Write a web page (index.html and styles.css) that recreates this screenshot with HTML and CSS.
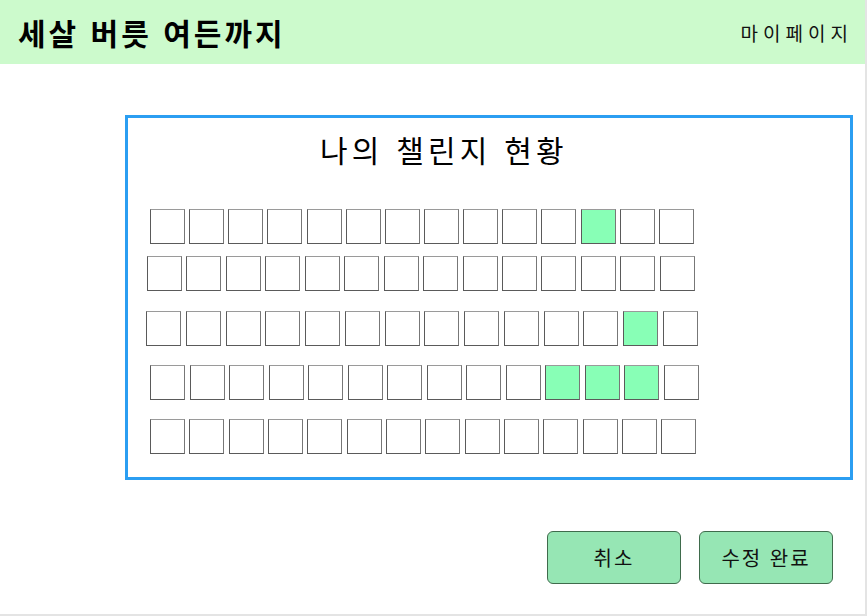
FILE: index.html
```html
<!DOCTYPE html>
<html lang="ko">
<head>
    <meta charset="UTF-8">
    <meta name="viewport" content="width=device-width, initial-scale=1.0">
    <title>세살 버릇 여든까지 - 나의 챌린지 현황</title>
    <link rel="stylesheet" href="styles.css">
</head>
<body>
    <div class="page">
        <header class="topbar">
            <h1 class="logo">세살 버릇 여든까지</h1>
            <a class="mypage" href="#">마이페이지</a>
        </header>

        <main class="content">
            <section class="board">
                <h2>나의 챌린지 현황</h2>

                <div class="grid">
                    <div class="row row-1">
                        <span class="cell"></span><span class="cell"></span><span class="cell"></span><span class="cell"></span><span class="cell"></span><span class="cell"></span><span class="cell"></span><span class="cell"></span><span class="cell"></span><span class="cell"></span><span class="cell"></span><span class="cell done"></span><span class="cell"></span><span class="cell"></span>
                    </div>
                    <div class="row row-2">
                        <span class="cell"></span><span class="cell"></span><span class="cell"></span><span class="cell"></span><span class="cell"></span><span class="cell"></span><span class="cell"></span><span class="cell"></span><span class="cell"></span><span class="cell"></span><span class="cell"></span><span class="cell"></span><span class="cell"></span><span class="cell"></span>
                    </div>
                    <div class="row row-3">
                        <span class="cell"></span><span class="cell"></span><span class="cell"></span><span class="cell"></span><span class="cell"></span><span class="cell"></span><span class="cell"></span><span class="cell"></span><span class="cell"></span><span class="cell"></span><span class="cell"></span><span class="cell"></span><span class="cell done"></span><span class="cell"></span>
                    </div>
                    <div class="row row-4">
                        <span class="cell"></span><span class="cell"></span><span class="cell"></span><span class="cell"></span><span class="cell"></span><span class="cell"></span><span class="cell"></span><span class="cell"></span><span class="cell"></span><span class="cell"></span><span class="cell done"></span><span class="cell done"></span><span class="cell done"></span><span class="cell"></span>
                    </div>
                    <div class="row row-5">
                        <span class="cell"></span><span class="cell"></span><span class="cell"></span><span class="cell"></span><span class="cell"></span><span class="cell"></span><span class="cell"></span><span class="cell"></span><span class="cell"></span><span class="cell"></span><span class="cell"></span><span class="cell"></span><span class="cell"></span><span class="cell"></span>
                    </div>
                </div>
            </section>

            <div class="actions">
                <button class="btn">취소</button>
                <button class="btn">수정 완료</button>
            </div>
        </main>
    </div>
</body>
</html>
```

FILE: styles.css
```css
body {
    margin: 0;
    padding: 0;
    background: #fff;
    color: #000;
    font-family: "Noto Sans CJK KR", "Noto Sans", sans-serif;
}

.page {
    width: 865px;
    height: 614px;
    border-right: 2px solid #e4e4e4;
    border-bottom: 2px solid #e4e4e4;
    overflow: hidden;
}

.topbar {
    height: 64px;
    background: #ccfacc;
    display: flex;
    align-items: center;
    justify-content: space-between;
    padding: 0 12px 0 18px;
}

.logo {
    margin: 0;
    font-size: 30px;
    font-weight: bold;
    letter-spacing: 3px;
    line-height: 1;
}

.mypage {
    color: #111;
    text-decoration: none;
    font-size: 19px;
    letter-spacing: 5px;
}

.content {
    padding: 51px 0 0 125px;
}

.board {
    width: 722px;
    height: 359px;
    border: 3px solid #2b9ef2;
}

.board h2 {
    margin: 11px 0 0;
    padding-left: 192px;
    font-size: 30px;
    font-weight: normal;
    letter-spacing: 4.2px;
    line-height: 40px;
}

.grid {
    margin-top: 40px;
    display: flex;
    flex-direction: column;
}

.row {
    display: flex;
}

.row-1 { padding-left: 22px; gap: 4.15px; }
.row-2 { padding-left: 19px; margin-top: 12px; gap: 4.45px; }
.row-3 { padding-left: 18px; margin-top: 20px; gap: 4.75px; }
.row-4 { padding-left: 22px; margin-top: 19px; gap: 4.5px; }
.row-5 { padding-left: 22px; margin-top: 19px; gap: 4.35px; }

.cell {
    width: 33px;
    height: 33px;
    border: 1px solid #5a5a5a;
    border-top-color: #9a9a9a;
    border-right-color: #777;
    background: #fff;
}

.cell.done {
    background: #88ffb6;
}

.actions {
    display: flex;
    gap: 18px;
    margin: 51px 0 0 422px;
}

.btn {
    width: 134px;
    height: 53px;
    background: #96e6b4;
    border: 1px solid #3f6b4c;
    border-radius: 6px;
    font-family: inherit;
    font-size: 20px;
    letter-spacing: 2px;
    color: #111;
    cursor: pointer;
}
```
